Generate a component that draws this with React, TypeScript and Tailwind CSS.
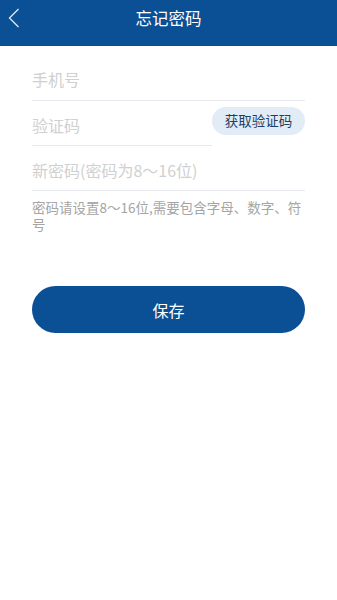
export default function App() {
  const font = { fontFamily: '"Noto Sans CJK SC", Roboto, sans-serif' };
  return (
    <div className="w-[337px] h-[600px] bg-white" style={font}>
      <div className="h-[46px] bg-[#0b4f95] relative flex items-center justify-center">
        <svg className="absolute left-[8px] top-[8px]" width="12" height="20" viewBox="0 0 12 20" fill="none">
          <path d="M10.5 1 L1.5 10 L10.5 19" stroke="#d6e4f5" strokeWidth="1.4" />
        </svg>
        <span className="text-white text-[16.5px] leading-none -mt-[10px]">忘记密码</span>
      </div>
      <div className="px-[32px]">
        <div className="h-[55px] pt-[12px] flex items-center border-b border-[#e6e9ee] text-[16px] text-[#d0d0d0]">
          手机号
        </div>
        <div className="flex items-end">
          <div className="flex-1 h-[45px] pt-[4px] flex items-center border-b border-[#e6e9ee] text-[16px] text-[#d0d0d0]">
            验证码
          </div>
          <div className="w-[93px] h-[45px] flex items-center justify-start pb-[6px]">
            <div className="w-[93px] h-[28px] rounded-full bg-[#e2ecf7] flex items-center justify-center text-[13.5px] text-[#1d3e66]">
              获取验证码
            </div>
          </div>
        </div>
        <div className="h-[45px] pt-[4px] flex items-center border-b border-[#e6e9ee] text-[16px] text-[#d0d0d0]">
          新密码(密码为8～16位)
        </div>
        <div className="pt-[8px] text-[13.5px] leading-[17px] text-[#a5a5a5]">
          密码请设置8～16位,需要包含字母、数字、符号
        </div>
        <div className="mt-[53px] h-[47px] rounded-full bg-[#0b4f95] flex items-center justify-center text-white text-[16px]">
          保存
        </div>
      </div>
    </div>
  );
}
